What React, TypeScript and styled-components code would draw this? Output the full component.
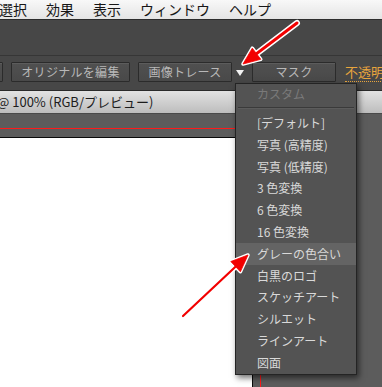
import React from "react";
import styled, { createGlobalStyle } from "styled-components";

const Global = createGlobalStyle`
  html, body { margin: 0; padding: 0; background: #5b5b5b; }
  #root { width: 382px; height: 387px; }
`;

const FONT = `"Noto Sans CJK JP", "Liberation Sans", sans-serif`;

const Screen = styled.div`
  position: relative;
  width: 382px;
  height: 387px;
  overflow: hidden;
  display: flex;
  flex-direction: column;
  background: #5b5b5b;
  font-family: ${FONT};
`;

const MenuBar = styled.div`
  flex: none;
  height: 19px;
  display: flex;
  align-items: center;
  gap: 19px;
  padding-left: 0;
  background: linear-gradient(#f8f8f8, #e4e4e4);
  border-bottom: 1px solid #2c2c2c;
  font-size: 14px;
  line-height: 19px;
  color: #161616;
`;

const MenuTitle = styled.span<{ $first?: boolean }>`
  margin-left: ${(p) => (p.$first ? "-1px" : "0")};
  white-space: nowrap;
`;

const AppBar = styled.div`
  flex: none;
  height: 35px;
  background: #474747;
  border-bottom: 1px solid #363636;
`;

const ControlBar = styled.div`
  flex: none;
  height: 35px;
  box-sizing: border-box;
  padding-top: 6px;
  display: flex;
  align-items: flex-start;
  background: #474747;
  border-bottom: 1px solid #2a2a2a;
`;

const ToolButton = styled.div<{ $w: number; $gapAfter: number; $lead?: number }>`
  flex: none;
  width: ${(p) => p.$w}px;
  height: 20px;
  margin-left: ${(p) => p.$lead ?? 0}px;
  margin-right: ${(p) => p.$gapAfter}px;
  box-sizing: border-box;
  border: 1px solid #2b2b2b;
  border-radius: 1px;
  background: linear-gradient(#505050, #494949);
  box-shadow: inset 0 1px 0 rgba(255, 255, 255, 0.07);
  color: #b8b8b8;
  font-size: 12px;
  line-height: 18px;
  text-align: center;
  white-space: nowrap;
  letter-spacing: 0.3px;
`;

const DropArrow = styled.div`
  flex: none;
  width: 20px;
  height: 20px;
  display: flex;
  align-items: center;
  justify-content: center;
  padding-right: 4px;
  box-sizing: border-box;
  &::before {
    content: "";
    display: block;
    margin-top: 2px;
    border-left: 4px solid transparent;
    border-right: 4px solid transparent;
    border-top: 6px solid #f2f2f2;
  }
`;

const LinkText = styled.span`
  flex: none;
  font-size: 13px;
  line-height: 19px;
  color: #e9a53d;
  white-space: nowrap;
  border-bottom: 1px dotted #e9a53d;
`;

const DocTab = styled.div`
  flex: none;
  height: 23px;
  box-sizing: border-box;
  background: linear-gradient(#e2e2e2, #bdbdbd);
  border-bottom: 1px solid #4a4a4a;
  font-size: 13px;
  line-height: 22px;
  color: #1c1c1c;
  white-space: nowrap;
  text-indent: -3px;
`;

const Workspace = styled.div`
  flex: 1;
  padding-top: 14px;
  background: #5c5c5c;
  display: flex;
  flex-direction: column;
`;

const BleedFrame = styled.div`
  flex: 1;
  width: 261px;
  box-sizing: border-box;
  border-top: 1px solid #ff1a1a;
  border-right: 1px solid #ff1a1a;
  padding-top: 8px;
  padding-right: 7px;
  display: flex;
  flex-direction: column;
`;

const Artboard = styled.div`
  flex: 1;
  background: #ffffff;
  border-top: 1px solid #0a0a0a;
  border-right: 1px solid #0a0a0a;
`;

const Menu = styled.div`
  position: absolute;
  left: 235px;
  top: 83px;
  width: 122px;
  box-sizing: border-box;
  border: 1px solid #242424;
  background: #535353;
  box-shadow: 2px 3px 6px rgba(0, 0, 0, 0.55);
  padding-bottom: 0;
`;

const MenuItem = styled.div<{ $active?: boolean; $disabled?: boolean; $h?: number }>`
  height: ${(p) => p.$h ?? 21.8}px;
  line-height: ${(p) => p.$h ?? 21.8}px;
  padding-left: 21px;
  font-size: 12px;
  white-space: nowrap;
  color: ${(p) => (p.$disabled ? "#7a7a7a" : "#d9d9d9")};
  background: ${(p) => (p.$active ? "#646464" : "transparent")};
`;

const Separator = styled.div`
  height: 1px;
  margin: 3px 2px 3px 2px;
  background: #3a3a3a;
  border-bottom: 1px solid #5c5c5c;
  box-sizing: content-box;
`;

const Overlay = styled.svg`
  position: absolute;
  left: 0;
  top: 0;
  width: 382px;
  height: 387px;
  pointer-events: none;
`;

type Pt = [number, number];

function Arrow({ from, to, w, head, half }: { from: Pt; to: Pt; w: number; head: number; half: number }) {
  const dx = to[0] - from[0];
  const dy = to[1] - from[1];
  const len = Math.hypot(dx, dy);
  const ux = dx / len;
  const uy = dy / len;
  const nx = -uy;
  const ny = ux;
  const bx = to[0] - ux * head;
  const by = to[1] - uy * head;
  const pts = `${to[0]},${to[1]} ${bx + nx * half},${by + ny * half} ${bx - nx * half},${by - ny * half}`;
  return (
    <g>
      <line x1={from[0]} y1={from[1]} x2={bx + ux * 2} y2={by + uy * 2} stroke="#ffffff" strokeWidth={w + 3} strokeLinecap="round" />
      <polygon points={pts} fill="#ffffff" stroke="#ffffff" strokeWidth={3.5} strokeLinejoin="round" />
      <line x1={from[0]} y1={from[1]} x2={bx + ux * 2} y2={by + uy * 2} stroke="#f20000" strokeWidth={w} strokeLinecap="round" />
      <polygon points={pts} fill="#f20000" stroke="#f20000" strokeWidth={0.8} strokeLinejoin="round" />
    </g>
  );
}

const menuTitles = ["選択", "効果", "表示", "ウィンドウ", "ヘルプ"];
const traceItems = [
  "[デフォルト]",
  "写真 (高精度)",
  "写真 (低精度)",
  "3 色変換",
  "6 色変換",
  "16 色変換",
  "グレーの色合い",
  "白黒のロゴ",
  "スケッチアート",
  "シルエット",
  "ラインアート",
  "図面",
];

export default function App() {
  return (
    <Screen>
      <Global />
      <MenuBar>
        {menuTitles.map((t, i) => (
          <MenuTitle key={t} $first={i === 0}>
            {t}
          </MenuTitle>
        ))}
      </MenuBar>
      <AppBar />
      <ControlBar>
        <ToolButton $w={14} $lead={-11} $gapAfter={8} />
        <ToolButton $w={119} $gapAfter={8}>
          オリジナルを編集
        </ToolButton>
        <ToolButton $w={94} $gapAfter={0}>
          画像トレース
        </ToolButton>
        <DropArrow />
        <ToolButton $w={84} $gapAfter={9}>
          マスク
        </ToolButton>
        <LinkText>不透明度</LinkText>
      </ControlBar>
      <DocTab>@ 100% (RGB/プレビュー)</DocTab>
      <Workspace>
        <BleedFrame>
          <Artboard />
        </BleedFrame>
      </Workspace>
      <Menu>
        <MenuItem $disabled $h={20}>
          カスタム
        </MenuItem>
        <Separator />
        {traceItems.map((t) => (
          <MenuItem key={t} $active={t === "グレーの色合い"}>
            {t}
          </MenuItem>
        ))}
      </Menu>
      <Overlay viewBox="0 0 382 387">
        <Arrow from={[297, 23]} to={[243, 64]} w={3} head={17} half={7} />
        <Arrow from={[183, 316]} to={[248, 255]} w={2.2} head={17} half={7} />
      </Overlay>
    </Screen>
  );
}
